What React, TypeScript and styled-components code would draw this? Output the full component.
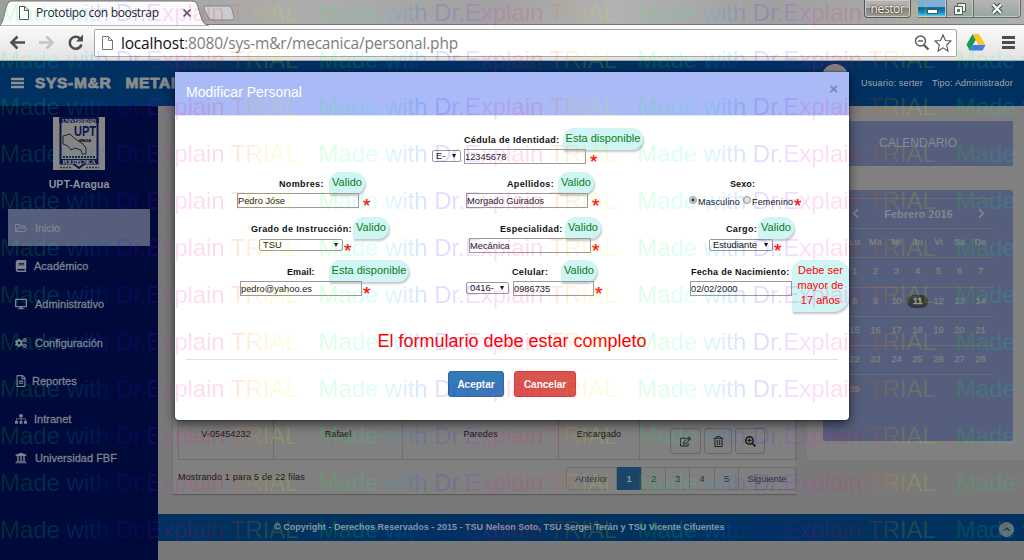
import React from "react";
import styled, { createGlobalStyle, css } from "styled-components";
import {
  FaRegFolderOpen, FaBook, FaDesktop, FaCogs, FaRegFileAlt, FaSitemap, FaUniversity,
  FaRegEdit, FaRegTrashAlt, FaSearchPlus, FaChevronLeft, FaChevronRight,
} from "react-icons/fa";

const Global = createGlobalStyle`
  * { box-sizing: border-box; }
  body { margin: 0; overflow: hidden; background: #797979; font-family: "Liberation Sans", Arial, sans-serif; }
`;

const Screen = styled.div`
  position: relative;
  width: 1024px;
  height: 560px;
  overflow: hidden;
  display: flex;
  flex-direction: column;
`;

/* ---------- browser frame ---------- */
const TabStrip = styled.div`
  height: 25px;
  flex: none;
  display: flex;
  justify-content: space-between;
  background: linear-gradient(100deg, #9d9d9d 0%, #adadad 30%, #a2a2a2 48%, #b2b2b2 60%, #a0a0a0 75%, #b0b0b0 100%);
  border-bottom: 1px solid #777;
`;
const Tab = styled.div`
  position: relative;
  width: 240px;
  height: 25px;
`;
const TabShape = styled.svg`
  position: absolute;
  left: 0;
  top: 0;
`;
const TabTitle = styled.div`
  position: relative;
  padding-left: 36px;
  font: 12px/26px "Open Sans", "Noto Sans", sans-serif;
  letter-spacing: -0.33px;
  color: #222;
  white-space: nowrap;
`;
const WindowButtons = styled.div`
  display: flex;
  align-items: flex-start;
  padding-right: 3px;
`;
const UserButton = styled.div`
  width: 47px;
  height: 18px;
  margin-right: 7px;
  border: 1px solid #555;
  border-top: 0;
  border-radius: 0 0 4px 4px;
  box-shadow: inset 0 0 0 1px #c9c9c9;
  background: linear-gradient(#b2b2b2 45%, #828282 50%, #9c9c9c);
  color: #fff;
  text-shadow: 0 0 2px #222, 0 0 1px #222;
  font: 12px/17px "Open Sans", sans-serif;
  letter-spacing: -0.4px;
  text-align: center;
`;
const WinButton = styled.div<{ $w: number; $blue?: boolean }>`
  width: ${(p) => p.$w}px;
  height: 18px;
  display: flex;
  justify-content: center;
  align-items: center;
  border: 1px solid #666;
  border-width: 0 1px 1px 0;
  box-shadow: inset -1px -1px 0 #c8c8c8;
  background: ${(p) => (p.$blue ? "linear-gradient(#7fb0d2 40%, #0d5e94 45%, #1b8fc4 75%, #5ee0f4)" : "linear-gradient(#b5b5b5, #a0a0a0)")};
  &:last-child { border-radius: 0 0 4px 0; }
`;
const Toolbar = styled.div`
  height: 36px;
  flex: none;
  display: flex;
  align-items: center;
  padding: 0 9px 0 8px;
  background: linear-gradient(#fbfbfb, #e2e2e2);
  border-bottom: 1px solid #a6a6a6;
`;
const NavIcons = styled.svg`
  width: 86px;
  height: 30px;
  flex: none;
`;
const Omnibox = styled.div`
  width: 863px;
  height: 28px;
  flex: none;
  display: flex;
  align-items: center;
  padding: 0 4px 0 7px;
  border: 1px solid #a8a8a8;
  border-radius: 2px;
  background: #fff;
`;
const Url = styled.div`
  flex: 1;
  padding-left: 8px;
  font: 15.5px/24px "Open Sans", "Noto Sans", sans-serif;
  letter-spacing: -0.19px;
  color: #7d7d7d;
  b { font-weight: 400; color: #111; }
`;
const Extensions = styled.svg`
  width: 58px;
  height: 30px;
  flex: none;
`;

/* ---------- application ---------- */
const TopBar = styled.header`
  height: 45px;
  flex: none;
  display: flex;
  align-items: center;
  padding: 0 11px 2px 11px;
  background: #003161;
  color: #898b8e;
`;
const Brand = styled.div`
  flex: 1;
  display: flex;
  gap: 14px;
  padding-left: 11px;
  font-size: 15.5px;
  font-weight: bold;
  letter-spacing: 0.7px;
  -webkit-text-stroke: 0.9px currentColor;
`;
const Avatar = styled.div`
  width: 26px;
  height: 26px;
  margin: 0 13px 11px 0;
  border-radius: 50%;
  background: #858585;
`;
const Session = styled.div`
  display: flex;
  gap: 9px;
  font-size: 9px;
  letter-spacing: 0.2px;
  color: #a3a7ab;
`;
const Body = styled.div`
  flex: 1;
  display: flex;
`;
const Sidebar = styled.aside`
  width: 158px;
  padding: 11px 8px 0;
  background: #000a3a;
  color: #7f828f;
`;
const Logo = styled.svg`
  display: block;
  width: 52px;
  height: 53px;
  margin: 0 auto;
`;
const University = styled.div`
  margin: 6px 0 17px;
  text-align: center;
  font-size: 10.6px;
  line-height: 16px;
  font-weight: bold;
  color: #8f919c;
`;
const NavItem = styled.div<{ $active?: boolean; $gap: number }>`
  height: ${(p) => (p.$active ? 37 : 38.3)}px;
  display: flex;
  align-items: center;
  gap: ${(p) => p.$gap}px;
  padding-left: 7px;
  margin-bottom: ${(p) => (p.$active ? 1 : 0)}px;
  font-size: 11px;
  letter-spacing: ${(p) => (p.$active ? -0.1 : 0)}px;
  background: ${(p) => (p.$active ? "#555e7c" : "none")};
  -webkit-text-stroke: 0.3px currentColor;
  svg { font-size: 12px; stroke: none; }
`;
const Main = styled.main`
  flex: 1;
  display: flex;
  flex-direction: column;
  background: #797979;
`;
const Content = styled.div`
  height: 408px;
  display: flex;
  align-items: flex-start;
  gap: 11px;
  padding-left: 15px;
`;
const TablePanel = styled.section`
  width: 623px;
  height: 388px;
  display: flex;
  flex-direction: column;
  justify-content: flex-end;
  padding: 0 0 4px 5px;
  background: #808080;
  box-shadow: 0 1px 1px #5c5c5c;
`;
const Row = styled.div`
  display: grid;
  grid-template-columns: 95px 129px 156px 81px 157px;
  height: 60px;
  border: solid #6e6e6e;
  border-width: 0 1px 1px 1px;
`;
const Cell = styled.div`
  padding-top: 27px;
  text-align: center;
  font-size: 9px;
  line-height: 14px;
  letter-spacing: 0.1px;
  color: #161616;
  border-right: 1px solid #6e6e6e;
  &:last-child { border-right: 0; }
`;
const Actions = styled(Cell)`
  display: flex;
  gap: 3px;
  padding: 28px 0 0 30px;
`;
const Action = styled.div<{ $w: number }>`
  width: ${(p) => p.$w}px;
  height: 26px;
  display: flex;
  justify-content: center;
  align-items: center;
  border: 1px solid #686868;
  border-radius: 3px;
  font-size: 11px;
  color: #1d1d1d;
`;
const TableFooter = styled.div`
  display: flex;
  justify-content: space-between;
  padding-top: 7px;
  font-size: 9px;
  letter-spacing: 0.18px;
  line-height: 20px;
  color: #161616;
`;
const Pager = styled.div`
  display: flex;
  height: 23px;
  border: 1px solid #6c6c6c;
  border-radius: 3px;
`;
const Page = styled.div<{ $w: number; $on?: boolean }>`
  width: ${(p) => p.$w}px;
  text-align: center;
  line-height: 22px;
  color: ${(p) => (p.$on ? "#8d97a1" : "#263645")};
  font-size: 9.4px;
  letter-spacing: 0;
  border-right: 1px solid #6c6c6c;
  &:last-child { border-right: 0; }
  ${(p) => p.$on && css`background: #1b4468; margin: -1px 0; line-height: 24px; font-weight: bold;`}
`;
const SidePanel = styled.section`
  width: 217px;
  height: 354px;
  display: flex;
  flex-direction: column;
  gap: 24px;
  padding: 15px 11px 0 16px;
  background: #808080;
`;
const SideTitle = styled.div`
  height: 45px;
  line-height: 44px;
  text-align: center;
  font-size: 12px;
  color: #878a97;
  background: #555e7c;
`;
const Calendar = styled.div`
  height: 251px;
  padding: 8px 20px 0;
  border-radius: 3px;
  background: #555e7c;
  color: #7c8083;
`;
const Month = styled.div`
  height: 30px;
  display: flex;
  justify-content: space-between;
  align-items: center;
  padding: 0 6px 0 7px;
  border-top: 1px solid #6a6d70;
  font-size: 11px;
  font-weight: bold;
  color: #82868e;
`;
const Week = styled.div`
  display: grid;
  grid-template-columns: repeat(7, 21px);
  height: 29.3px;
  padding: 0 0 1px 1px;
  align-items: center;
  justify-items: center;
  border-top: 1px solid #6a6d70;
  font-size: 9.2px;
  -webkit-text-stroke: 0.3px currentColor;
`;
const Day = styled.span<{ $today?: boolean; $bold?: boolean }>`
  width: 21px;
  text-align: center;
  line-height: 13px;
  border-radius: 7px;
  font-weight: ${(p) => (p.$today || p.$bold ? "bold" : "normal")};
  -webkit-text-stroke: ${(p) => (p.$bold ? "0" : "inherit")};
  ${(p) => p.$today && css`background: #353739; color: #999;`}
`;
const Footer = styled.footer`
  position: relative;
  height: 27px;
  flex: none;
  padding-left: 116px;
  line-height: 27px;
  background: #00315f;
  font-size: 9px;
  font-weight: bold;
  letter-spacing: 0.02px;
  color: #8b959f;
`;
const UpButton = styled.svg`
  position: absolute;
  right: 10px;
  top: 8px;
`;

/* ---------- dialog ---------- */
const Dialog = styled.div`
  position: absolute;
  left: 175px;
  top: 72px;
  width: 674px;
  height: 348px;
  background: #fff;
  border-radius: 0 0 4px 4px;
  box-shadow: 0 4px 12px rgba(0, 0, 0, 0.6), 0 0 2px rgba(0, 0, 0, 0.7);
  display: flex;
  flex-direction: column;
`;
const DialogHead = styled.div`
  height: 44px;
  flex: none;
  display: flex;
  justify-content: space-between;
  padding: 0 11px 0 11px;
  line-height: 40px;
  font-size: 14px;
  background: #a9baf6;
  border-bottom: 1px solid #e4e6ee;
  color: #fff;
`;
const Close = styled.span`
  font-size: 15px;
  line-height: 34px;
  font-weight: bold;
  color: #7686b4;
`;
const Form = styled.div`
  height: 212px;
  flex: none;
  padding-top: 12px;
`;
const FormRow = styled.div<{ $h: number }>`
  height: ${(p) => p.$h}px;
  display: grid;
  grid-template-columns: 225px 225px 224px;
`;
const Field = styled.div`
  min-width: 0;
`;
const Line = styled.div<{ $x: number; $h: number }>`
  height: ${(p) => p.$h}px;
  padding-left: ${(p) => p.$x}px;
  display: flex;
  align-items: flex-start;
  white-space: nowrap;
`;
const Label = styled.div<{ $w: number; $ls?: number }>`
  width: ${(p) => p.$w}px;
  flex: none;
  padding-top: 6px;
  font-size: 9px;
  line-height: 13px;
  font-weight: bold;
  letter-spacing: ${(p) => p.$ls ?? 0.35}px;
  color: #111;
`;
const Tip = styled.div<{ $w: number; $error?: boolean }>`
  width: ${(p) => p.$w}px;
  height: ${(p) => (p.$error ? 52 : 22)}px;
  flex: none;
  padding-top: ${(p) => (p.$error ? 3 : 0)}px;
  border-radius: ${(p) => (p.$error ? "12px 14px 16px 0" : "11px 11px 11px 0")};
  background: #cff5f4;
  box-shadow: 1px 2px 2px rgba(0, 0, 0, 0.22);
  text-align: center;
  font-size: 11px;
  line-height: ${(p) => (p.$error ? 15 : 21)}px;
  letter-spacing: 0.02px;
  color: ${(p) => (p.$error ? "#f00" : "#0c7c17")};
`;
const Input = styled.div<{ $w: number }>`
  width: ${(p) => p.$w}px;
  height: 15px;
  flex: none;
  border: 1px solid #9a9a9a;
  font-size: 9.3px;
  line-height: 14px;
  color: #222;
`;
const Select = styled.div<{ $w: number; $r: number }>`
  width: ${(p) => p.$w}px;
  height: 12px;
  margin: 1px ${(p) => p.$r}px 0 0;
  flex: none;
  display: flex;
  justify-content: space-between;
  align-items: center;
  padding: 0 4px 0 3px;
  border: 1px solid #999;
  border-radius: 2px;
  font-size: 9.3px;
  line-height: 10px;
  color: #111;
  &::after {
    content: "";
    border: 2.5px solid transparent;
    border-top: 4px solid #111;
    border-bottom: 0;
  }
`;
const Star = styled.span<{ $x: number }>`
  margin: 4px 0 0 ${(p) => p.$x}px;
  font-size: 19px;
  line-height: 18px;
  color: #f00;
  -webkit-text-stroke: 0.2px #f00;
`;
const Radio = styled.span<{ $on?: boolean }>`
  width: 8px;
  height: 8px;
  margin: 3px 1px 0 0;
  border: 1px solid #999;
  border-radius: 50%;
  background: ${(p) => (p.$on ? "radial-gradient(#444 30%, #ddd 50%)" : "#e3e3e3")};
`;
const RadioText = styled.span<{ $w: number }>`
  width: ${(p) => p.$w}px;
  padding-top: 2px;
  font-size: 9px;
  line-height: 14px;
  letter-spacing: 0.15px;
  color: #111;
`;
const Warning = styled.div`
  height: 32px;
  margin: 0 11px;
  text-align: center;
  font-size: 18px;
  line-height: 26px;
  color: #f00;
  border-bottom: 1px solid #e2e2e2;
`;
const Buttons = styled.div`
  display: flex;
  justify-content: center;
  gap: 10px;
  padding-top: 11px;
`;
const Button = styled.div<{ $w: number; $danger?: boolean }>`
  width: ${(p) => p.$w}px;
  height: 26px;
  border: 1px solid ${(p) => (p.$danger ? "#d43f3a" : "#2e6da4")};
  border-radius: 3px;
  background: ${(p) => (p.$danger ? "#d9534f" : "#337ab7")};
  color: #fff;
  text-align: center;
  font-size: 10px;
  font-weight: bold;
  line-height: 25px;
`;

/* ---------- trial watermark ---------- */
const Watermark = styled.div`
  position: absolute;
  left: 0;
  top: -10px;
  width: 1300px;
  opacity: 0.135;
  pointer-events: none;
`;
const WatermarkRow = styled.div`
  display: flex;
  height: 47px;
  line-height: 46px;
`;
const WatermarkText = styled.span`
  width: 318.6px;
  flex: none;
  font-size: 24px;
  letter-spacing: -0.04px;
  white-space: nowrap;
  color: transparent;
  background: linear-gradient(90deg, #00ff22 0, #00ff66 8%, #00ffee 17%, #0090ff 27%, #0038ff 33%, #3000ff 40%, #a000ff 48%, #ff00e0 55%, #ff0070 62%, #ff0010 70%, #ff7000 76%, #ffd000 83%, #e8ff00 89%, #80ff00 96%, #30ff00 100%);
  background-clip: text;
  -webkit-background-clip: text;
`;

const nav = [
  { icon: <FaRegFolderOpen />, text: "Inicio", gap: 8 },
  { icon: <FaBook />, text: "Académico", gap: 7 },
  { icon: <FaDesktop />, text: "Administrativo", gap: 8 },
  { icon: <FaCogs />, text: "Configuración", gap: 8 },
  { icon: <FaRegFileAlt />, text: "Reportes", gap: 5 },
  { icon: <FaSitemap />, text: "Intranet", gap: 7 },
  { icon: <FaUniversity />, text: "Universidad FBF", gap: 8 },
];
const weeks = [0, 1, 2, 3, 4].map((w) => [1, 2, 3, 4, 5, 6, 7].map((d) => w * 7 + d).filter((d) => d <= 29));

function Browser() {
  return (
    <>
      <TabStrip>
        <Tab>
          <TabShape width="240" height="26" viewBox="0 0 240 26">
            <path d="M0 25C4 23 5 5 9 2Q10 1 13 1H192Q196 1 197 4L202 20Q204 25 208 25V26H0Z" fill="#fbfbfb" stroke="#777" />
            <path d="M204 6H229Q231 6 232 9L234 17Q235 20 232 20H213Q209 20 208 17L204 9Z" fill="#c9ccd1" stroke="#828282" />
            <path d="M19.5 6.500H25L28.500 10V19.500H19.500ZM24.500 6.500V10.500H28.500" fill="#fff" stroke="#555" />
            <path d="M183.500 9.500L190.500 16.500M190.500 9.500L183.500 16.500" stroke="#555" strokeWidth="1.700" />
          </TabShape>
          <TabTitle>Prototipo con boostrap</TabTitle>
        </Tab>
        <WindowButtons>
          <UserButton>nestor</UserButton>
          <WinButton $w={29} $blue>
            <svg width="13" height="14"><rect x="1.500" y="7.500" width="10" height="4" fill="#fff" stroke="#456" /></svg>
          </WinButton>
          <WinButton $w={27}>
            <svg width="14" height="14" fill="#eee" stroke="#555"><path d="M4.500 1.500h8v8h-8z" /><path d="M1.500 4.500h8v8h-8z" fill="#fff" /><path d="M4.500 7.500h2v2h-2z" fill="#999" /></svg>
          </WinButton>
          <WinButton $w={47}>
            <svg width="14" height="12"><path d="M3 1.500L11 10M11 1.500L3 10" stroke="#444" strokeWidth="4.500" /><path d="M3 1.500L11 10M11 1.500L3 10" stroke="#fff" strokeWidth="2.500" /></svg>
          </WinButton>
        </WindowButtons>
      </TabStrip>
      <Toolbar>
        <NavIcons viewBox="8 28 86 30" fill="none" stroke="#4f4f4f" strokeWidth="2.600">
          <path d="M25 42.500H12M17.500 36.500L11.500 42.500L17.500 48.500" />
          <path d="M39 42.500H52M46.500 36.500L52.500 42.500L46.500 48.500" stroke="#c4c4c4" />
          <path d="M80 38.500A6 6 0 1 0 81.500 44.500" />
          <path d="M83 34.500V41.500H76Z" fill="#4f4f4f" stroke="none" />
        </NavIcons>
        <Omnibox>
          <svg width="11" height="16" fill="#fff" stroke="#777"><path d="M.5 1.500H6.500L10.500 5.500V14.500H.5ZM6.500 1.500V5.500H10.500" /></svg>
          <Url><b>localhost</b>:8080/sys-m&amp;r/mecanica/personal.php</Url>
          <svg width="40" height="22" fill="none" stroke="#555" strokeWidth="1.400">
            <circle cx="8.500" cy="9" r="5" /><path d="M6 9H11" /><path d="M12 13L16.500 17.500" strokeWidth="2.200" />
            <path d="M31 3L33.400 8.500L39 9L34.700 13L36 19L31 15.800L26 19L27.300 13L23 9L28.600 8.500Z" strokeWidth="1.100" />
          </svg>
        </Omnibox>
        <Extensions viewBox="957 28 58 30">
          <path d="M972.500 34L966.500 44.500L969.500 50.500L976 39.500Z" fill="#159b58" />
          <path d="M972.500 34H979L985.500 45H978.500Z" fill="#fbc626" />
          <path d="M972.500 45H985.500L982.500 50.500H969.500Z" fill="#3f7de8" />
          <path d="M1002 37.500H1015M1002 42.500H1015M1002 47.500H1015" stroke="#4c4c4c" strokeWidth="3" />
        </Extensions>
      </Toolbar>
    </>
  );
}

function Crest() {
  return (
    <Logo viewBox="0 0 52 53">
      <path d="M0 0H52V53H0Z" fill="#858585" />
      <path d="M7.500 1H44.500V46.500H32L26 51L20 46.500H7.500Z" fill="#858585" stroke="#0a1548" strokeWidth="2" />
      <path d="M6 1H46V6H6ZM8 42H44V47H8Z" fill="#0a1548" />
      <text x="26" y="5.800" fontSize="5.500" fontFamily="Liberation Serif" fontWeight="bold" fill="#999" textAnchor="middle" textLength="34">UNIVERSIDAD</text>
      <text x="32" y="19" fontSize="14" fontWeight="bold" fill="#0a1548" textAnchor="middle" textLength="22" lengthAdjust="spacingAndGlyphs">UPT</text>
      <text x="32" y="25" fontSize="4" fontWeight="bold" fill="#111" textAnchor="middle" textLength="13">ARAGUA</text>
      <path d="M10 19L17 17L21 21L30 27L33 31V37L29 37L28 33L22 31L18 33L15 29L10 27Z" fill="none" stroke="#222" />
      <path d="M10 40H42" stroke="#222" strokeWidth="2" strokeDasharray="2 1" />
      <text x="26" y="47" fontSize="6" fontFamily="Liberation Serif" fontWeight="bold" fill="#999" textAnchor="middle" textLength="33">POLITECNICA</text>
      <path d="M7 50.500H19M33 50.500H46" stroke="#333" strokeWidth="1.500" strokeDasharray="2 1" />
    </Logo>
  );
}

function Application() {
  return (
    <>
      <TopBar>
        <svg width="13" height="12" stroke="#8d9094" strokeWidth="2.400"><path d="M0 2H13M0 6H13M0 10H13" /></svg>
        <Brand><span>SYS-M&amp;R</span><span>METAL</span></Brand>
        <Avatar />
        <Session><span>Usuario: serter</span><span>Tipo: Administrador</span></Session>
      </TopBar>
      <Body>
        <Sidebar>
          <Crest />
          <University>UPT-Aragua</University>
          {nav.map((n, i) => (
            <NavItem key={n.text} $active={i === 0} $gap={n.gap}>{n.icon}{n.text}</NavItem>
          ))}
        </Sidebar>
        <Main>
          <Content>
            <TablePanel>
              <Row>
                <Cell>V-05454232</Cell><Cell>Rafael</Cell><Cell>Paredes</Cell><Cell>Encargado</Cell>
                <Actions>
                  <Action $w={31}><FaRegEdit /></Action>
                  <Action $w={28}><FaRegTrashAlt /></Action>
                  <Action $w={30}><FaSearchPlus /></Action>
                </Actions>
              </Row>
              <TableFooter>
                <span>Mostrando 1 para 5 de 22 filas</span>
                <Pager>
                  <Page $w={50}>Anterior</Page><Page $w={25} $on>1</Page><Page $w={24}>2</Page>
                  <Page $w={24}>3</Page><Page $w={25}>4</Page><Page $w={24}>5</Page><Page $w={56}>Siguiente</Page>
                </Pager>
              </TableFooter>
            </TablePanel>
            <SidePanel>
              <SideTitle>CALENDARIO</SideTitle>
              <Calendar>
                <Month><FaChevronLeft />Febrero 2016<FaChevronRight /></Month>
                <Week>{["Lu", "Ma", "Mi", "Ju", "Vi", "Sá", "Do"].map((d) => <Day key={d} $bold>{d}</Day>)}</Week>
                {weeks.map((w) => (
                  <Week key={w[0]}>{w.map((d) => <Day key={d} $today={d === 11}>{d}</Day>)}</Week>
                ))}
              </Calendar>
            </SidePanel>
          </Content>
          <Footer>
            © Copyright - Derechos Reservados - 2015 - TSU Nelson Soto, TSU Sergei Terán y TSU Vicente Cifuentes
            <UpButton width="15" height="15" fill="none"><circle cx="7.500" cy="7.500" r="7.500" fill="#656b74" /><path d="M4.500 9L7.500 6L10.500 9" stroke="#2c3036" strokeWidth="1.400" /></UpButton>
          </Footer>
        </Main>
      </Body>
    </>
  );
}

function EditDialog() {
  return (
    <Dialog>
      <DialogHead>Modificar Personal<Close>×</Close></DialogHead>
      <Form>
        <FormRow $h={44}>
          <Field />
          <Field>
            <Line $x={64} $h={21}><Label $w={99}>Cédula de Identidad:</Label><Tip $w={80}>Esta disponible</Tip></Line>
            <Line $x={32} $h={15}><Select $w={29} $r={3}>E-</Select><Input $w={122}>12345678</Input><Star $x={4}>*</Star></Line>
          </Field>
        </FormRow>
        <FormRow $h={45}>
          <Field>
            <Line $x={104} $h={21}><Label $w={50}>Nombres:</Label><Tip $w={36}>Valido</Tip></Line>
            <Line $x={62} $h={15}><Input $w={122}>Pedro Jóse</Input><Star $x={4}>*</Star></Line>
          </Field>
          <Field>
            <Line $x={107} $h={21}><Label $w={51}>Apellidos:</Label><Tip $w={36}>Valido</Tip></Line>
            <Line $x={66} $h={15}><Input $w={122}>Morgado Guirados</Input><Star $x={4}>*</Star></Line>
          </Field>
          <Field>
            <Line $x={105} $h={21}><Label $w={40} $ls={0.1}>Sexo:</Label></Line>
            <Line $x={64} $h={15}>
              <Radio $on /><RadioText $w={45}>Masculino</RadioText><Radio /><RadioText $w={42}>Femenino</RadioText><Star $x={0}>*</Star>
            </Line>
          </Field>
        </FormRow>
        <FormRow $h={43}>
          <Field>
            <Line $x={76} $h={21}><Label $w={102}>Grado de Instrucción:</Label><Tip $w={36}>Valido</Tip></Line>
            <Line $x={84} $h={15}><Select $w={84} $r={0}>TSU</Select><Star $x={1}>*</Star></Line>
          </Field>
          <Field>
            <Line $x={100} $h={21}><Label $w={65}>Especialidad:</Label><Tip $w={36}>Valido</Tip></Line>
            <Line $x={69} $h={15}><Input $w={122}>Mecánica</Input><Star $x={1}>*</Star></Line>
          </Field>
          <Field>
            <Line $x={101} $h={21}><Label $w={32}>Cargo:</Label><Tip $w={36}>Valido</Tip></Line>
            <Line $x={84} $h={15}><Select $w={64} $r={0}>Estudiante</Select><Star $x={1}>*</Star></Line>
          </Field>
        </FormRow>
        <FormRow $h={44}>
          <Field>
            <Line $x={112} $h={21}><Label $w={42} $ls={0.1}>Email:</Label><Tip $w={80}>Esta disponible</Tip></Line>
            <Line $x={65} $h={15}><Input $w={122}>pedro@yahoo.es</Input><Star $x={1}>*</Star></Line>
          </Field>
          <Field>
            <Line $x={112} $h={21}><Label $w={49}>Celular:</Label><Tip $w={36}>Valido</Tip></Line>
            <Line $x={66} $h={15}><Select $w={43} $r={4}>0416-</Select><Input $w={81}>0986735</Input><Star $x={1}>*</Star></Line>
          </Field>
          <Field>
            <Line $x={66} $h={21}><Label $w={101} $ls={0.27}>Fecha de Nacimiento:</Label><Tip $w={57} $error>Debe ser<br />mayor de<br />17 años</Tip></Line>
            <Line $x={65} $h={15}><Input $w={102}>02/02/2000</Input></Line>
          </Field>
        </FormRow>
      </Form>
      <Warning>El formulario debe estar completo</Warning>
      <Buttons><Button $w={56}>Aceptar</Button><Button $w={62} $danger>Cancelar</Button></Buttons>
    </Dialog>
  );
}

export default function App() {
  return (
    <Screen>
      <Global />
      <Browser />
      <Application />
      <EditDialog />
      <Watermark>
        {Array.from({ length: 12 }, (_, r) => (
          <WatermarkRow key={r}>
            {[0, 1, 2, 3].map((c) => <WatermarkText key={c}>Made with Dr.Explain TRIAL</WatermarkText>)}
          </WatermarkRow>
        ))}
      </Watermark>
    </Screen>
  );
}
